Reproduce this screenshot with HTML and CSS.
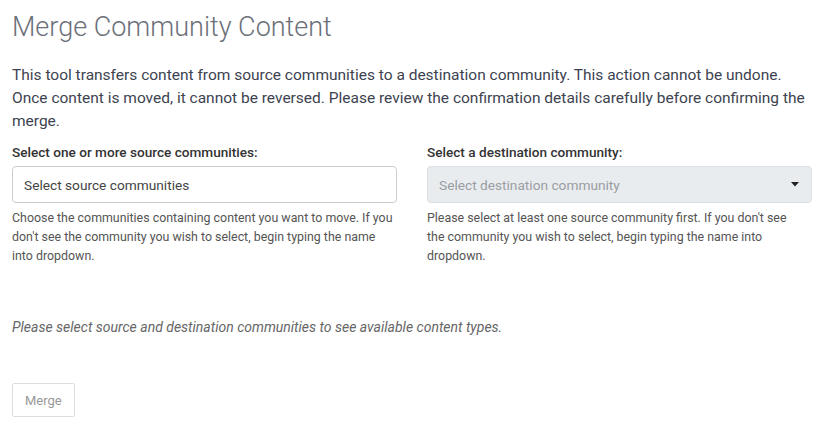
FILE: index.html
```html
<!DOCTYPE html>
<html lang="en">
<head>
<meta charset="utf-8">
<title>Merge Community Content</title>
<link rel="stylesheet" href="styles.css">
</head>
<body>
<main class="page">
  <h1 class="title">Merge Community Content</h1>
  <p class="intro">This tool transfers content from source communities to a destination community. This action cannot be undone. Once content is moved, it cannot be reversed. Please review the confirmation details carefully before confirming the merge.</p>
  <div class="fields">
    <div class="field">
      <label class="label">Select one or more source communities:</label>
      <div class="input">Select source communities</div>
      <p class="help">Choose the communities containing content you want to move. If you don't see the community you wish to select, begin typing the name into dropdown.</p>
    </div>
    <div class="field">
      <label class="label">Select a destination community:</label>
      <div class="input disabled">
        <span>Select destination community</span>
        <svg class="caret" width="8" height="5" viewBox="0 0 8 5"><path d="M0 0h8L4 4.6z" fill="#222"/></svg>
      </div>
      <p class="help help-dest">Please select at least one source community first. If you don't see the community you wish to select, begin typing the name into dropdown.</p>
    </div>
  </div>
  <p class="notice">Please select source and destination communities to see available content types.</p>
  <button class="btn" type="button">Merge</button>
</main>
</body>
</html>
```

FILE: styles.css
```css
html, body {
  margin: 0;
  padding: 0;
  background: #ffffff;
}
body {
  font-family: Roboto, "Liberation Sans", sans-serif;
  color: #3d4350;
}
.page {
  width: 800px;
  padding: 10px 12px 0 12px;
  display: flex;
  flex-direction: column;
}
.title {
  margin: 0;
  font-size: 27px;
  font-weight: 300;
  line-height: 34px;
  color: #6c7079;
}
.intro {
  margin: 20px 0 0 0;
  font-size: 15.5px;
  line-height: 23px;
  color: #3d4350;
}
.fields {
  margin-top: 9px;
  display: grid;
  grid-template-columns: 1fr 1fr;
  column-gap: 30px;
}
.field {
  display: flex;
  flex-direction: column;
}
.label {
  font-size: 13.6px;
  font-weight: 500;
  line-height: 20px;
  color: #333;
  margin-bottom: 4px;
}
.input {
  box-sizing: border-box;
  height: 37px;
  border: 1px solid #ccc;
  border-radius: 4px;
  padding: 0 12px 0 11px;
  display: flex;
  align-items: center;
  justify-content: space-between;
  font-size: 13.7px;
  color: #444;
}
.input.disabled {
  background: #e9ecef;
  border-color: #dcdfe3;
  color: #9a9da2;
}
.help {
  margin: 5px 0 0 0;
  font-size: 12.4px;
  line-height: 19px;
  color: #555;
}
.help-dest {
  padding-right: 8px;
}
.notice {
  margin: 52px 0 0 0;
  font-size: 14px;
  line-height: 20px;
  font-style: italic;
  color: #666;
}
.btn {
  align-self: flex-start;
  margin-top: 46px;
  height: 34px;
  padding: 0 12px;
  background: #fff;
  border: 1px solid #ddd;
  border-radius: 2px;
  font-family: inherit;
  font-size: 13px;
  color: #999;
}
```
